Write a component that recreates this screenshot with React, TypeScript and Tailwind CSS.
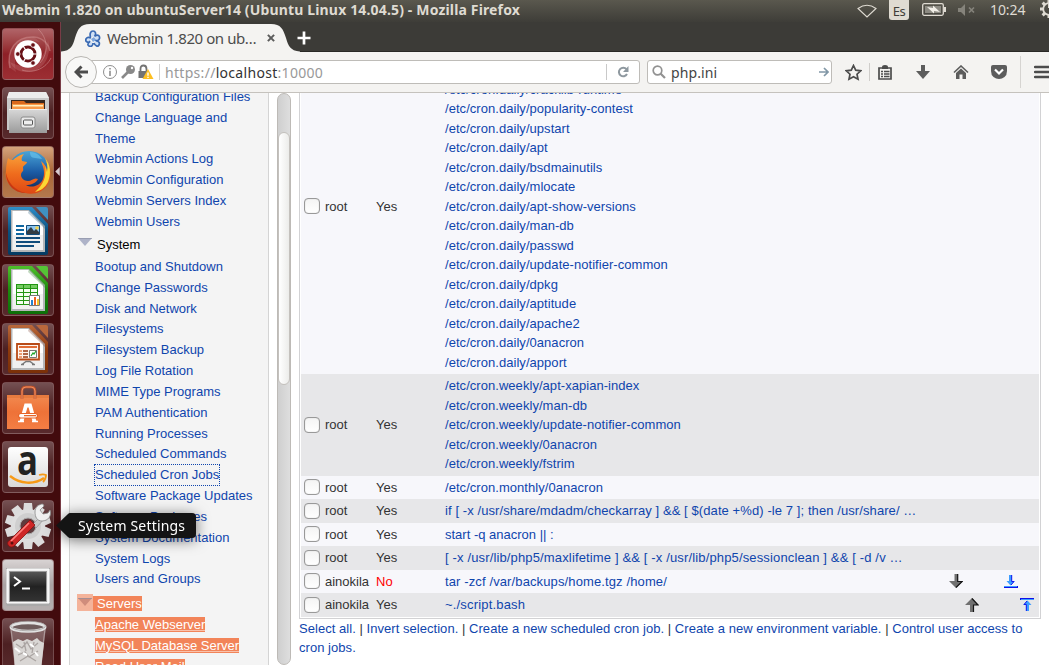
import React from "react";

const stroke = (d: string, c: string, w: number, extra: object = {}) => (
  <path d={d} fill="none" stroke={c} strokeWidth={w} {...extra} />
);

/* ---------- launcher artwork, each drawn on a 52x52 tile ---------- */

function Dash() {
  return (
    <>
      <path d="M8 40C4 22 14 8 32 9c10 1 15 8 16 14" fill="none" stroke="#d09090" strokeOpacity=".5" strokeWidth="1.5" />
      <path d="M8 40C4 22 14 8 32 9l6 5C20 10 10 22 14 44z" fill="#e0a0a0" fillOpacity=".18" />
      <path d="M46 12c4 16-4 32-22 32-8 0-14-5-16-10 14 8 34 4 38-22z" fill="#e0a0a0" fillOpacity=".22" />
      {stroke("M36 1c10 9 11 24 2 34M20 42c12 4 24-2 29-12", "#d8a0a0", 1, { strokeOpacity: 0.5 })}
      <circle cx="26" cy="26" r="13.7" fill="#fff" />
      <circle cx="26" cy="26" r="7" fill="none" stroke="#681016" strokeWidth="3" />
      {stroke("M26 26L37 26M26 26L20 16M26 26L20 36", "#fff", 1.2)}
      <circle cx="26" cy="26" r="5.3" fill="#fff" />
      {[[15.8, 26], [31, 17], [31, 35]].map(([x, y]) => (
        <circle key={y} cx={x} cy={y} r="2.3" fill="#681016" stroke="#fff" strokeWidth=".8" />
      ))}
    </>
  );
}

function Files() {
  return (
    <>
      <path d="M7 5h37l3 6v32H5V11z" fill="#c9c9c9" />
      <path d="M7 5h37l3 6H5z" fill="#ececec" />
      <path d="M9 13h34v10H9z" fill="#38281f" />
      <path d="M10 14h12l2 2h18v6H10z" fill="#d9691c" />
      <path d="M10 17h32v5H10z" fill="#f79a48" />
      <path d="M11 18h30v1.5H11z" fill="#fff0c0" />
      <path d="M7 22h38v24H7z" fill="url(#steel)" />
      <path d="M7 22h38v1H7z" fill="#f0f0f0" />
      <rect x="19" y="30" width="14" height="11" rx="2" fill="#e9e9e9" stroke="#8a8a8a" />
      <rect x="21.5" y="33" width="9" height="5" rx="1" fill="#eee" stroke="#555" />
    </>
  );
}

function Firefox() {
  return (
    <>
      <circle cx="27" cy="26" r="21" fill="url(#globe)" />
      <path d="M28 6c7 0 10 4 12 7l-7-1c-4 0-5-3-5-6z" fill="#6cc7ee" fillOpacity=".6" />
      <path
        d="M6 12c1 1 3 2 5 2 2-2 6-5 11-6-2 2-3 5-2 7l5 1c0 2-3 3-4 5 0 2 1 4-1 5-3 4 1 9 6 9 4 0 6-4 10-2-2 4-7 6-12 6 6 4 15 0 17-6 3-8-1-14-2-18 4 3 6 7 7 12 1-5-1-10-3-13 6 6 7 16 3 24-5 9-15 11-23 9C10 44 2 36 4 25c0-5 1-9 2-13z"
        fill="url(#fox)"
      />
      <path d="M43 12c6 7 6 16 3 24-3 6-8 9-13 10 8-7 12-15 10-26l2 6c1-6 0-10-2-14z" fill="#fcd734" />
      <path d="M4 27c2 10 9 17 19 20-11 0-19-9-19-20z" fill="#c73812" />
    </>
  );
}

function Doc({ a, b, fill, children }: { a: string; b: string; fill: string; children: React.ReactNode }) {
  return (
    <>
      <path d="M6 4q0-2 2-2h22l16 17v29q0 2-2 2H8q-2 0-2-2z" fill={fill} />
      <path d="M34 2h10q2 0 2 2v11z" fill={a} />
      <g transform="translate(-2 0)">
        <path d="M11 5h18l16 16v26H11z" fill="#b4b6b8" />
        <path d="M12.500 6H29l14 15v24H12.500z" fill="#fff" />
        <path d="M12.500 30H43v15H12.500z" fill="#ddd" fillOpacity=".45" />
        <path d="M29 5l16 16v3L28 8z" fill={b} fillOpacity=".25" />
        {children}
      </g>
    </>
  );
}

function Writer() {
  return (
    <Doc a="#3f91c2" b="#04426a" fill="url(#wr)">
      {stroke("M16 21h8M16 25h8M16 29h8", "#0e66a0", 2)}
      {stroke("M16 33h24M16 37h24M16 41h18", "#114d7c", 2)}
      <path d="M26.5 20.5h13v9h-13z" fill="#8dc8f4" stroke="#134b78" />
      <circle cx="37" cy="23" r="1.8" fill="#f4d34e" />
      <path d="M27 29v-3l4-4 3 4 2-2 3 3v2z" fill="#333c42" />
    </Doc>
  );
}

function Calc() {
  return (
    <Doc a="#55c435" b="#0c6a06" fill="url(#ca)">
      <path d="M16 20h22v21H16z" fill="#239613" />
      {[21, 25, 29, 33, 37].map((y, i) =>
        [17, 24, 31].map((x) => <path key={x + "-" + y} d={`M${x} ${y}h6v3h-6z`} fill={i ? "#f4fff0" : "#75cb62"} />)
      )}
      <path d="M29.5 31.5h10v10h-10z" fill="#fff" stroke="#777" />
      <path d="M31 36h2v5h-2z" fill="#2382cf" />
      <path d="M34 33h2v8h-2z" fill="#ed641f" />
      <path d="M37 35h2v6h-2z" fill="#f3c62d" />
    </Doc>
  );
}

function Impress() {
  return (
    <Doc a="#ba683c" b="#69200a" fill="url(#im)">
      <path d="M17 21h22v15.500H17z" fill="#fff5ef" stroke="#b84a17" strokeWidth="1.8" />
      <path d="M19 23h18v2H19z" fill="#e16c35" />
      {stroke("M19 28h3M19 31h3M19 34h3", "#ee9d73", 1.8)}
      {stroke("M23 28h5M23 31h5M23 34h5", "#963710", 1.6)}
      <path d="M29.5 27.5h7v7h-7z" fill="#fff" stroke="#777" />
      {stroke("M31 33l2-3 1 1 2-3", "#20a52e", 1.2)}
      {stroke("M22 41.500l4-3h4l4 3M21 41.500h3M32 41.500h3", "#777", 1.4)}
    </Doc>
  );
}

function Software() {
  return (
    <>
      <path d="M5 13h42v34H5z" fill="url(#bag)" />
      <path d="M5 13h42v3H5z" fill="#e77b3f" />
      {stroke("M20 17V9q0-4 4-4h5q4 0 4 4v8", "#c85226", 2.6)}
      {stroke("M20 17V9q0-4 4-4h5q4 0 4 4v8", "#f0a27a", 0.8)}
      {stroke("M19.500 39.500L24 23.500h4l4.500 16", "#fff", 3.800)}
      <path d="M16 39.500h6M30 39.500h6" stroke="#fff" strokeWidth="1.500" />
      <rect x="16.500" y="31.500" width="19" height="4.500" rx="2.200" fill="#fff" stroke="#e7662a" strokeWidth="1.200" />
      <path d="M22 33h12v1.300H22z" fill="#e7662a" />
    </>
  );
}

function Amazon() {
  return (
    <>
      <rect x="6" y="6" width="40" height="40" rx="3" fill="url(#paper)" />
      <text x="25.500" y="34" textAnchor="middle" fontSize="41" fontWeight="700" fill="#222" textLength="21" lengthAdjust="spacingAndGlyphs" fontFamily="Open Sans, sans-serif">a</text>
      {stroke("M8 35c10 8 24 9 34 2", "#f79a16", 2.4)}
      {stroke("M37 34c3-1 5-1 7 0 0 3-1 5-3 7", "#f79a16", 1.8)}
    </>
  );
}

function Settings() {
  return (
    <>
      {Array.from({ length: 10 }, (_, i) => (
        <path key={i} d="M21 12l1-9h8l1 9z" fill="#dcdcdc" transform={`rotate(${i * 36} 26 26)`} />
      ))}
      <circle cx="26" cy="26" r="17" fill="#dedede" />
      <circle cx="26" cy="26" r="13" fill="#cfcfcf" />
      <circle cx="26" cy="26" r="8" fill="#5f3b3d" stroke="#aaa" />
      <path d="M31 24L40 15l3 3-9 10z" fill="#c7c7c7" stroke="#888" strokeWidth=".6" />
      <path d="M33 12c0-5 4-8 8-8l1 2-4 4 3 4 5-1 2-3c2 6-2 11-8 11-5 0-7-4-7-9z" fill="#f0f0f0" stroke="#898989" strokeWidth=".8" />
      <path d="M28 20l5 5L14 44c-2 3-5 4-7 2s-2-4 1-6z" fill="#ce2626" stroke="#86100f" strokeWidth=".8" />
      {stroke("M27 23L9 41", "#ff817d", 1.7)}
      <circle cx="10" cy="43" r="1.5" fill="#5b0e0d" />
    </>
  );
}

function Terminal() {
  return (
    <>
      <path d="M4 9h44v36q0 2-2 2H6q-2 0-2-2z" fill="#a9a9a9" />
      <path d="M5 10h42v34H5z" fill="#efefef" stroke="#fff" />
      <path d="M7 12h38v31H7z" fill="#999" />
      <path d="M8 13h36v29H8z" fill="url(#term)" />
      {stroke("M12 18l6 4.5-6 4.5", "#fff", 2)}
      {stroke("M20 29.500h8", "#fff", 2)}
    </>
  );
}

function Trash() {
  return (
    <>
      <path d="M8 9l5 43h26l5-43z" fill="#c8bcbc" fillOpacity=".35" />
      {stroke("M9 11l5 41M43 11l-5 41", "#c9bebe", 1.2, { strokeOpacity: 0.6 })}
      <path d="M11 24l5-3 5 2 4-2 5 2 5-3 3 3 4 2-3 27H13z" fill="#d9d6d4" />
      {stroke("M14 26l6 4 5-6 4 7 7-6M16 37l7-3 4 5 9-6M22 24l2 9M32 24l-2 11M18 43l8-5 8 5", "#aaa4a2", 1.3)}
      {stroke("M13 30l5 4M28 26l4 3M21 35l4 2M33 34l3 4", "#fff", 2)}
      <ellipse cx="26" cy="9" rx="17" ry="4.3" fill="#6f5c5c" stroke="#e2e2e2" strokeWidth="3" />
      <ellipse cx="26" cy="8" rx="17.5" ry="4.8" fill="none" stroke="#8f8888" strokeWidth=".6" />
    </>
  );
}

const plain = "bg-linear-to-b from-[#745052] via-[#4d2022] to-[#582a2c]";
const launcher = [
  { name: "dash", art: <Dash />, tile: "bg-linear-to-b from-[#b06468] via-[#8f2027] to-[#9c2e33]" },
  { name: "files", art: <Files />, tile: plain },
  { name: "firefox", art: <Firefox />, tile: "bg-linear-to-b from-[#d5a47c] via-[#a96537] to-[#b4794d]" },
  { name: "writer", art: <Writer />, tile: plain },
  { name: "calc", art: <Calc />, tile: plain },
  { name: "impress", art: <Impress />, tile: plain },
  { name: "software", art: <Software />, tile: plain },
  { name: "amazon", art: <Amazon />, tile: plain },
  { name: "settings", art: <Settings />, tile: plain },
  { name: "terminal", art: <Terminal />, tile: "bg-linear-to-b from-[#d8d3d3] via-[#aaa3a3] to-[#b5afaf]" },
  { name: "trash", art: <Trash />, tile: plain },
];

function Gradients() {
  const g = (id: string, stops: string[]) => (
    <linearGradient id={id} x1="0" y1="0" x2="0" y2="1">
      {stops.map((c, i) => <stop key={c} offset={i / (stops.length - 1)} stopColor={c} />)}
    </linearGradient>
  );
  return (
    <svg className="absolute size-0">
      <defs>
        {g("steel", ["#d8d8d8", "#9b9b9b"])}
        {g("globe", ["#4aa5d8", "#1b5ba5", "#10224f"])}
        {g("fox", ["#f9a13a", "#ef6c1d", "#dd4714"])}
        {g("wr", ["#2f8fca", "#0a517f", "#053b62"])}
        {g("ca", ["#4fc02b", "#1d8a0e", "#0c6f08"])}
        {g("im", ["#b9683b", "#8f3a0d", "#7b3008"])}
        {g("bag", ["#f28a50", "#ee7238", "#f47e44"])}
        {g("paper", ["#ffffff", "#d9d9d9"])}
        {g("term", ["#555555", "#222222", "#333333"])}
      </defs>
    </svg>
  );
}

function Launcher() {
  return (
    <aside className="flex w-[61px] shrink-0 flex-col gap-[7px] border-r border-[#783c46] bg-[#420b0d] pt-1.5 pl-0.5">
      {launcher.map((l) => (
        <div key={l.name} className={`relative size-[52px] shrink-0 rounded-[4px] border border-[#8b6668]/60 ${l.tile}`}>
          <svg viewBox="0 0 52 52" className="-m-px size-[52px]">{l.art}</svg>
          {l.name === "firefox" && (
            <svg viewBox="0 0 5 10" className="absolute top-5 left-[52px] h-[9px] w-[5px]"><path d="M5 0v10L0 5z" fill="#d8cbd0" /></svg>
          )}
        </div>
      ))}
    </aside>
  );
}

/* ---------- window chrome ---------- */

function TitleBar() {
  return (
    <header className="flex h-[22px] shrink-0 items-center bg-linear-to-b from-[#5a584e] to-[#3e3d38] font-['Noto_Sans','Open_Sans',sans-serif] text-[#dfdbd2]">
      <span className="-mt-1 ml-0.5 w-[540px] shrink-0 text-[14px] font-bold whitespace-nowrap tracking-[0.155px]">
        Webmin 1.820 on ubuntuServer14 (Ubuntu Linux 14.04.5) - Mozilla Firefox
      </span>
      <svg viewBox="0 0 20 14" className="-mt-px ml-[315px] h-[14px] w-5 shrink-0">
        {stroke("M1 4.500Q10-2 19 4.500L10 13z", "#dfdbd2", 1.1)}
      </svg>
      <span className="ml-3 flex h-5 w-5 shrink-0 items-center justify-center self-start rounded-b-[3px] bg-[#dfdbd2] text-[13px] leading-5 tracking-[-0.5px] text-[#3f3e39]"><span className="pt-0.5">Es</span></span>
      <svg viewBox="0 0 24 13" className="-mt-[3px] ml-[13px] h-[13px] w-6 shrink-0">
        <rect x=".7" y=".7" width="20.600" height="11.600" rx="1.500" fill="none" stroke="#dfdbd2" strokeWidth="1.300" />
        <path d="M3 3h16v7H3z" fill="#8d8b83" />
        <path d="M5 4l6 1V2.500L18 9l-6-1v2.500z" fill="#f2efe8" />
        <path d="M22 4h2v5h-2z" fill="#dfdbd2" />
      </svg>
      <svg viewBox="0 0 18 12" className="-mt-[2px] ml-3 h-3 w-[18px] shrink-0">
        <path d="M0 4h3l4-4v12L3 8H0z" fill="#85837b" />
        {stroke("M11 3.500l5 5M16 3.500l-5 5", "#85837b", 1.700)}
      </svg>
      <span className="-mt-1 ml-[14px] w-[37px] shrink-0 text-[14px] whitespace-nowrap tracking-[-0.1px]">10:24</span>
      <svg viewBox="0 0 20 20" className="-mt-1 ml-3 size-5 shrink-0">
        {Array.from({ length: 8 }, (_, i) => <path key={i} d="M8.500 1h3v3.500h-3z" fill="#dfdbd2" transform={`rotate(${i * 45} 10 10)`} />)}
        <circle cx="10" cy="10" r="5.800" fill="none" stroke="#dfdbd2" strokeWidth="1.800" />
        <path d="M9 0h2.500v9H9z" fill="#dfdbd2" />
      </svg>
    </header>
  );
}

function Tabs() {
  return (
    <div className="flex h-[30px] shrink-0 border-b border-[#292825] bg-[#3c3b37] font-['Noto_Sans','Open_Sans',sans-serif]">
      <div className="relative h-[30px] w-[239px] shrink-0">
        <svg viewBox="0 0 239 30" className="absolute inset-0 h-[30px] w-[239px]">
          <path d="M0 29.500C10 29 12 23 14 16 17 7 19 2 29 2h181c10 0 12 5 15 14 2 7 4 13 14 13.500V30H0z" fill="#f4f3f1" />
        </svg>
        <div className="relative flex h-[32px] items-center pl-6 text-[15px] text-[#4c4c4c]">
          <svg viewBox="0 0 16 17" className="mr-[6px] h-[17px] w-4">
            <path d="M5.500 7c-1-3 0-6 2.500-6s3.500 3 1.500 5.500M10 6c3-2 5 0 4.500 2.500S11 11 10 10M11 11c3 0 4 2 3 4s-4 1-5-2M8 13c0 3-2 4-4 3s-1-3 1-5M5 12c-3 1-5-1-4-3s3-2 5-1" fill="#cfe0f5" stroke="#3a6ab3" strokeWidth="1.700" strokeLinejoin="round" />
            <path d="M6 9l3-2 2 3-3 2z" fill="#7ea6dc" />
          </svg>
          <span className="w-[155px] whitespace-nowrap tracking-[-0.42px]">Webmin 1.820 on ub…</span>
          <svg viewBox="0 0 9 9" className="ml-[5px] size-2">{stroke("M1 1l7 7M8 1L1 8", "#5c5c5c", 2.300)}</svg>
        </div>
      </div>
      <svg viewBox="0 0 14 14" className="-ml-[3px] mt-[9px] size-[14px]">{stroke("M7 .5v13M.5 7h13", "#fff", 2.700)}</svg>
    </div>
  );
}

function Toolbar() {
  return (
    <div className="relative flex h-[41px] shrink-0 items-center border-b border-[#c5c2bd] bg-[#f4f3f1] font-['Noto_Sans','Open_Sans',sans-serif] text-[14px]">
      <div className="z-10 ml-1 flex size-8 shrink-0 items-center justify-center rounded-full border border-[#b8b6b2] bg-[#f8f8f7]">
        <svg viewBox="0 0 14 14" className="size-[14px]">{stroke("M7.500 1.500L2 7l5.500 5.500M2 7h12", "#4c4c4c", 3)}</svg>
      </div>
      <div className="-ml-2 flex h-6 w-[551px] shrink-0 items-center rounded-r-[3px] border border-[#bebcb8] bg-white pl-[12px]">
        <svg viewBox="0 0 52 16" className="h-4 w-[52px] shrink-0">
          <circle cx="8" cy="8" r="6.500" fill="none" stroke="#8e8e8e" />
          <path d="M7.200 6.700h1.600V12H7.200zM7.200 4h1.600v1.600H7.200z" fill="#8e8e8e" />
          <circle cx="28.500" cy="5.500" r="4.500" fill="#898989" />
          <circle cx="30" cy="4" r="1.200" fill="#fff" />
          {stroke("M26 8l-6 6", "#898989", 2.600)}
          {stroke("M38.500 8V5q0-3.500 3-3.500t3 3.500v3", "#737373", 1.800)}
          <path d="M36.500 7h9v7h-9z" fill="#737373" />
          <path d="M46 5l5.500 10h-11z" fill="#fdbf22" />
          <path d="M45.300 8.500h1.400v3.300h-1.400zM45.300 12.700h1.400V14h-1.400z" fill="#fff" />
        </svg>
        <span className="ml-[5px] h-4 w-px bg-[#d2d2d2]" />
        <span className="ml-[5px] flex-1 whitespace-nowrap tracking-[0.3px] text-[#999]">https://<span className="text-[#333]">localhost</span>:10000</span>
        <span className="h-4 w-px bg-[#c9c9c9]" />
        <svg viewBox="0 0 12 12" className="mr-[10px] ml-[10px] size-3">
          {stroke("M9.500 3.200A4.300 4.300 0 1 0 10 8", "#8e989f", 2)}
          <path d="M11.500 0v6H6z" fill="#8e989f" />
        </svg>
      </div>
      <div className="ml-[7px] flex h-6 w-[185px] shrink-0 items-center rounded-[3px] border border-[#bebcb8] bg-white pl-1">
        <svg viewBox="0 0 14 14" className="size-[14px]">
          <circle cx="5.500" cy="5.500" r="4.300" fill="none" stroke="#929292" strokeWidth="1.700" />
          {stroke("M8.500 8.500L13 13", "#929292", 2.200)}
        </svg>
        <span className="ml-[5px] flex-1 tracking-[0.1px] text-[#444]">php.ini</span>
        <svg viewBox="0 0 10 10" className="mr-[2px] h-[10px] w-[10px]">{stroke("M0 5h8M5 1l4 4-4 4", "#8197a6", 1.700)}</svg>
      </div>
      <svg viewBox="0 0 17 17" className="ml-[13px] size-[17px] shrink-0">
        <path d="M8.500 1.500l2.200 4.700 5 .6-3.700 3.400 1 5-4.500-2.500-4.500 2.500 1-5L1.300 6.800l5-.6z" fill="none" stroke="#4c4c4c" strokeWidth="1.700" />
      </svg>
      <span className="ml-[7px] h-[18px] w-px shrink-0 bg-[#cfcdca]" />
      <svg viewBox="0 0 14 15" className="ml-2 h-[15px] w-[14px] shrink-0">
        <path d="M1 3h12v11H1z" fill="#f4f3f1" stroke="#4c4c4c" strokeWidth="1.700" />
        <path d="M4 2q0-2 3-2t3 2v2H4z" fill="#4c4c4c" />
        {stroke("M3 6.500h2M6 6.500h5.500M3 9h2M6 9h5.500M3 11.500h2M6 11.500h5.500", "#4c4c4c", 1.300)}
      </svg>
      <svg viewBox="0 0 14 14" className="ml-6 size-[14px] shrink-0"><path d="M5 0h4v6h5l-7 8-7-8h5z" fill="#5c5c5c" /></svg>
      <svg viewBox="0 0 16 14" className="ml-[23px] h-[14px] w-4 shrink-0">
        {stroke("M1 7.500l7-6.500 7 6.500", "#5c5c5c", 1.600)}
        <path d="M8 3.500l5 4.500v6H9.500V9.500h-3V14H3V8z" fill="#5c5c5c" />
      </svg>
      <svg viewBox="0 0 16 14" className="ml-[22px] h-[14px] w-4 shrink-0">
        <path d="M0 2q0-2 2-2h12q2 0 2 2v4q0 4-2.500 6Q11 14 8 14t-5.500-2Q0 10 0 6z" fill="#5c5c5c" />
        {stroke("M4 4.500l4 4 4-4", "#fff", 2.200)}
      </svg>
      <span className="ml-[13px] h-[32px] w-px shrink-0 bg-[#d6d4d1]" />
      <svg viewBox="0 0 16 14" className="ml-[13px] h-[14px] w-4 shrink-0">{stroke("M1 2h18M1 7h18M1 12h18", "#4c4c4c", 2.400, { strokeLinecap: "round" })}</svg>
    </div>
  );
}

/* ---------- Webmin menu ---------- */

const webmin = ["Backup Configuration Files", "Change Language and", "Theme", "Webmin Actions Log", "Webmin Configuration", "Webmin Servers Index", "Webmin Users"];
const system = ["Bootup and Shutdown", "Change Passwords", "Disk and Network", "Filesystems", "Filesystem Backup", "Log File Rotation", "MIME Type Programs", "PAM Authentication", "Running Processes", "Scheduled Commands", "Scheduled Cron Jobs", "Software Package Updates", "Software Packages", "System Documentation", "System Logs", "Users and Groups"];
const servers = ["Apache Webserver", "MySQL Database Server", "Read User Mail"];

const Triangle = ({ c }: { c: string }) => (
  <svg viewBox="0 0 14 8" className="h-2 w-[14px]"><path d="M0 0h14L7 8z" fill={c} /><path d="M0 .5h14" stroke="#8a8fa3" strokeOpacity=".6" /></svg>
);

function Menu() {
  return (
    <nav className="mr-[8px] ml-[8px] flex w-[200px] shrink-0 flex-col overflow-hidden border-x border-[#d4d4d4] bg-[#f4f4f4] px-px text-[13px] whitespace-nowrap text-[#0f45ad]">
      <div className="-mt-[6.6px] flex flex-col pl-6">
        {webmin.map((t) => <a key={t} className="flex h-[20.8px] shrink-0 items-center">{t}</a>)}
      </div>
      <div className="mt-[0.3px] flex h-6 shrink-0 items-center gap-[5px] pl-[7px] text-black">
        <span className="-mt-1"><Triangle c="#aeb3c8" /></span>
        <span>System</span>
      </div>
      <div className="flex flex-col pl-6">
        {system.map((t) => (
          <a key={t} className="flex h-[20.83px] shrink-0 items-center">
            <span className={t === "Scheduled Cron Jobs" ? "outline-1 outline-dotted outline-[#0f45ad]" : ""}>{t}</span>
          </a>
        ))}
      </div>
      <div className="mt-[3.6px] flex h-[20px] shrink-0 items-center pl-1.5 text-white">
        <span className="-mt-0.5 flex h-[17px] w-4 items-center justify-center bg-[#f4b39a]"><Triangle c="#d08d7c" /></span>
        <span className="h-[15px] bg-[#f28459] pl-1 leading-[15px]">Servers</span>
      </div>
      <div className="mt-[0.5px] flex flex-col pl-6 text-white">
        {servers.map((t) => <a key={t} className="flex h-[21px] shrink-0 items-center"><span className="h-[15px] bg-[#f28459] leading-[15px] underline decoration-white/50">{t}</span></a>)}
      </div>
    </nav>
  );
}

function Scrollbar() {
  return (
    <div className="h-full w-[14px] shrink-0 rounded-[7px] border border-[#bdbab6] bg-linear-to-r from-[#cfcfcf] to-[#dedede]">
      <div className="mt-[38px] h-[253px] w-3 rounded-[6px] border border-[#c4c1bd] bg-linear-to-r from-white to-[#ececea]" />
    </div>
  );
}

/* ---------- cron table ---------- */

const daily = ["cracklib-runtime", "popularity-contest", "upstart", "apt", "bsdmainutils", "mlocate", "apt-show-versions", "man-db", "passwd", "update-notifier-common", "dpkg", "aptitude", "apache2", "0anacron", "apport"].map((s) => "/etc/cron.daily/" + s);
const weekly = ["apt-xapian-index", "man-db", "update-notifier-common", "0anacron", "fstrim"].map((s) => "/etc/cron.weekly/" + s);

type Job = { user: string; active: boolean; cmds: string[]; spacing?: string; move?: "down" | "up" };
const jobs: Job[] = [
  { user: "root", active: true, cmds: daily },
  { user: "root", active: true, cmds: weekly },
  { user: "root", active: true, cmds: ["/etc/cron.monthly/0anacron"] },
  { user: "root", active: true, spacing: "tracking-[0.088px]", cmds: ["if [ -x /usr/share/mdadm/checkarray ] && [ $(date +%d) -le 7 ]; then /usr/share/ …"] },
  { user: "root", active: true, spacing: "tracking-[0px]", cmds: ["start -q anacron || :"] },
  { user: "root", active: true, spacing: "tracking-[0.145px]", cmds: ["[ -x /usr/lib/php5/maxlifetime ] && [ -x /usr/lib/php5/sessionclean ] && [ -d /v …"] },
  { user: "ainokila", active: false, spacing: "tracking-[0.12px]", cmds: ["tar -zcf /var/backups/home.tgz /home/"], move: "down" },
  { user: "ainokila", active: true, spacing: "tracking-[0.18px]", cmds: ["~./script.bash"], move: "up" },
];

function Move({ dir }: { dir: "down" | "up" }) {
  const up = dir === "up";
  return (
    <div className={up ? "flex items-center gap-[41px] pr-[5px]" : "flex items-center gap-[41px] pr-[21px]"}>
      <svg viewBox="0 0 14 14" className={up ? "size-[14px] rotate-180" : "size-[14px]"}>
        <path d="M5.500 0h3.500v7h5l-7 7-7-7h5.500z" fill="#707070" />
        {stroke(up ? "M5.500 0v7H1l6 6.500" : "M8.700 0v7.500h4.500L7 13.500", "#151515", 1.200)}
      </svg>
      <svg viewBox="0 0 14 14" className={up ? "size-[14px] rotate-180" : "size-[14px]"}>
        <path d="M5 1h3v6h3l-4.500 4.500L2.500 7H5z" fill="#3c9dff" />
        {stroke("M7.700 1v6.500H10L7 11", "#1717ee", 1)}
        <path d="M0 12h14v2H0z" fill="#1010e8" />
        <path d="M0 12h13v1H0z" fill="#3c9dff" />
      </svg>
    </div>
  );
}

function CronTable() {
  return (
    <div className="flex h-[526px] w-[742px] shrink-0 flex-col justify-end overflow-hidden border border-t-0 border-[#d2d2d4] px-px pb-[1.4px] text-[13px] whitespace-nowrap text-[#333]">
      {jobs.map((j, i) => (
        <div
          key={i}
          className={`flex shrink-0 items-center ${i === 0 ? "h-[335.5px]" : ""} ${i % 2 ? "bg-[#e7e7e9]" : "bg-[#f7f7fb]"}`}
        >
          <span className="ml-[3px] size-4 shrink-0 rounded-[4px] border border-[#999] bg-linear-to-b from-[#f4f4f4] to-white shadow-[inset_0_0_1px_#aaa]" />
          <span className="ml-[5px] w-[51px]">{j.user}</span>
          <span className={j.active ? "w-[69px]" : "w-[69px] text-[#f00]"}>{j.active ? "Yes" : "No"}</span>
          <div className={`flex flex-1 flex-col self-end py-0.5 text-[#0f45ad] ${j.spacing ?? "tracking-[0.045px]"}`}>
            {j.cmds.map((c) => <a key={c} className="h-[19.5px] leading-[19.5px]">{c}</a>)}
          </div>
          {j.move && <Move dir={j.move} />}
        </div>
      ))}
    </div>
  );
}

function Actions() {
  const first = ["Select all.", "Invert selection.", "Create a new scheduled cron job.", "Create a new environment variable."];
  return (
    <div className="text-[13px] leading-[19px] tracking-[0.042px] text-[#0f45ad]">
      <p className="whitespace-nowrap">
        {first.map((t) => <React.Fragment key={t}>{t} <span className="text-[#333]">|</span> </React.Fragment>)}
        Control user access to
      </p>
      <p>cron jobs.</p>
    </div>
  );
}

function Tooltip() {
  return (
    <div className="absolute top-[513px] left-[56px] z-20 flex h-[25px] w-[140px] items-center drop-shadow-[0_2px_7px_rgba(0,0,0,.55)]">
      <svg viewBox="0 0 140 25" className="absolute inset-0 h-[25px] w-[140px]">
        <path d="M0 12.500L12 1q1-1 2-1h122q4 0 4 4v17q0 4-4 4H14q-1 0-2-1z" fill="#141414" />
      </svg>
      <span className="relative ml-[22px] font-['Noto_Sans','Open_Sans',sans-serif] text-[14px] whitespace-nowrap tracking-[0.18px] text-white">System Settings</span>
    </div>
  );
}

export default function App() {
  return (
    <div className="relative flex h-[665px] w-[1049px] flex-col overflow-hidden bg-white font-['Liberation_Sans',Arial,sans-serif]">
      <Gradients />
      <TitleBar />
      <div className="flex min-h-0 flex-1">
        <Launcher />
        <div className="flex min-w-0 flex-1 flex-col overflow-hidden">
          <Tabs />
          <Toolbar />
          <div className="flex min-h-0 flex-1">
            <Menu />
            <Scrollbar />
            <main className="ml-2 flex min-w-0 flex-1 flex-col overflow-hidden">
              <CronTable />
              <Actions />
            </main>
          </div>
        </div>
      </div>
      <Tooltip />
    </div>
  );
}
